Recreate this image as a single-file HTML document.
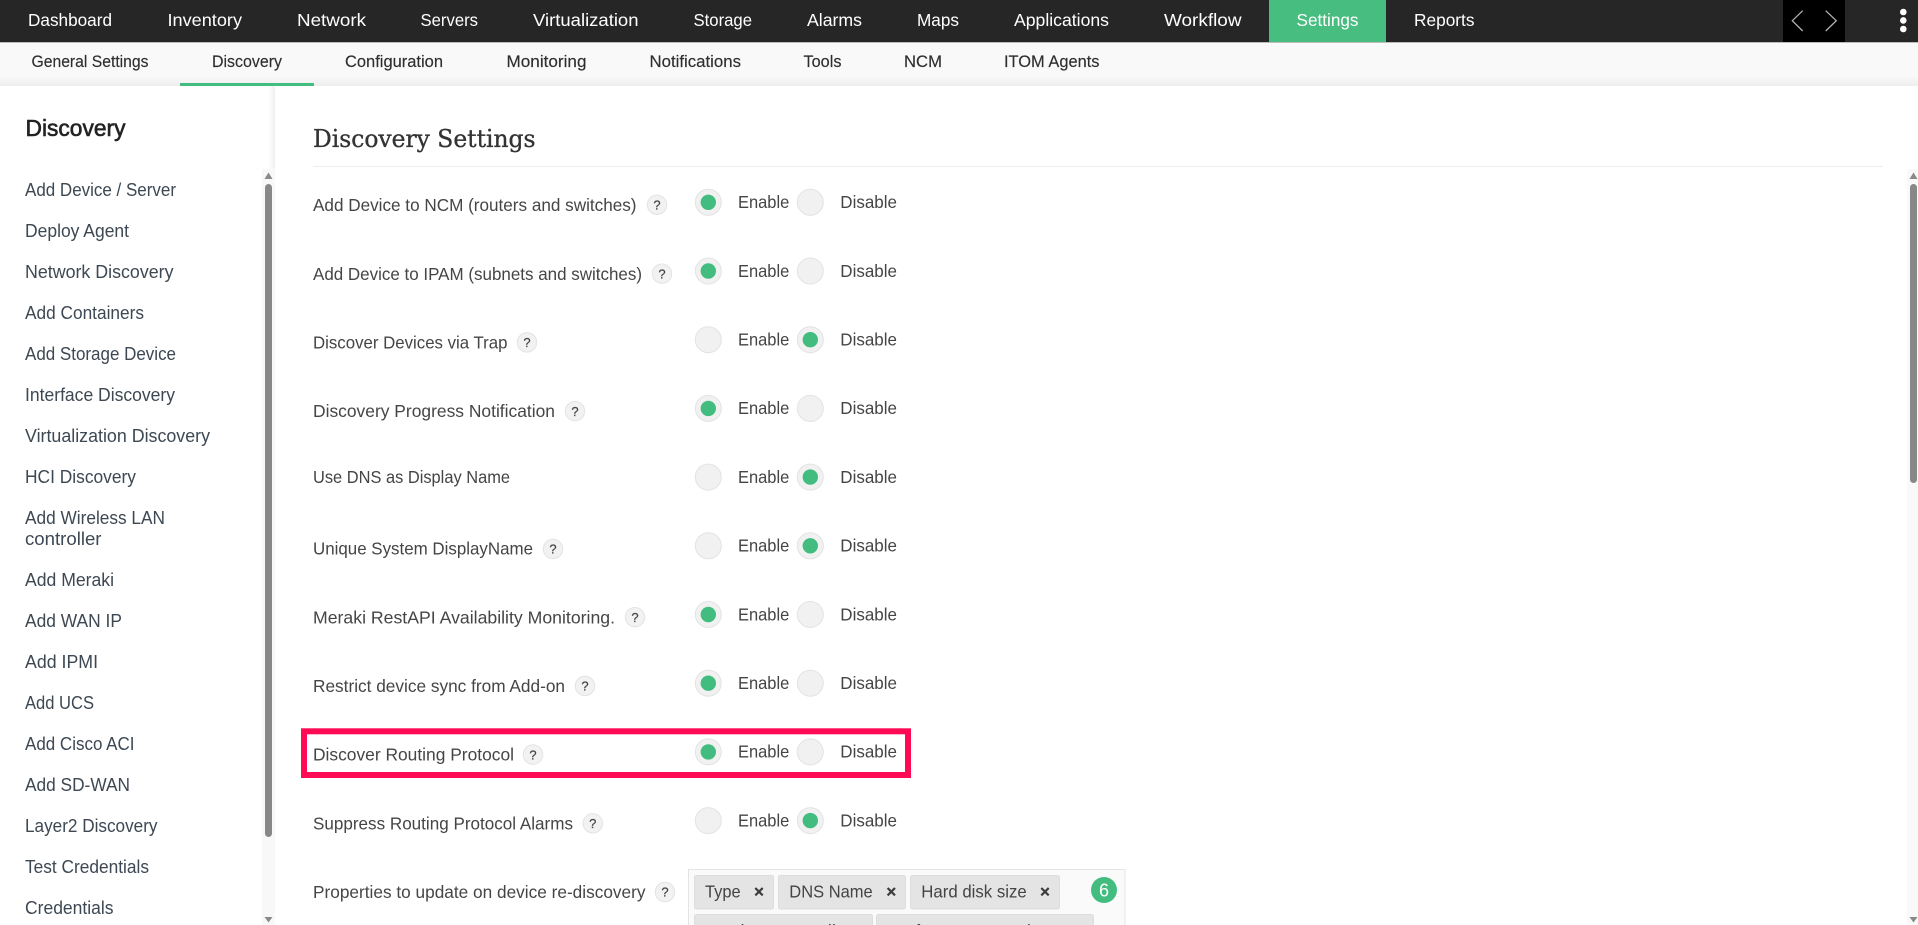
<!DOCTYPE html>
<html lang="en">
<head>
<meta charset="utf-8">
<title>Discovery Settings</title>
<style>
html,body{margin:0;padding:0;width:1918px;height:925px;overflow:hidden;background:#fff}
svg{display:block;position:absolute;left:0;top:0}
text{font-family:"Liberation Sans",sans-serif;white-space:pre}
.nav text{font-size:17.5px;fill:#fff}
.sub text{font-size:16.5px;fill:#2e2e2e}
.side text{font-size:18px;fill:#3d4853}
.lab text{font-size:17.5px;fill:#454545}
.opt text{font-size:17.5px;fill:#454545}
.help circle{fill:#f2f2f2;stroke:#e3e3e3;stroke-width:1}
.help text{font-size:13px;fill:#444;stroke:#444;stroke-width:.2;text-anchor:middle}
.r circle{fill:#f1f1f1;stroke:#e3e3e3;stroke-width:1}
.r circle.on{fill:#43bd7f;stroke:none}
.tag rect{fill:#e4e4e4;stroke:#dddddd;stroke-width:1}
.tag text{font-size:17.5px;fill:#444}
.tag path{stroke:#3c3c3c;stroke-width:2.2;fill:none}
</style>
</head>
<body>
<svg width="1918" height="925" viewBox="0 0 1918 925" xmlns="http://www.w3.org/2000/svg">
<defs>
<linearGradient id="sg" x1="0" y1="0" x2="0" y2="1"><stop offset="0" stop-color="#f9f9f9"/><stop offset="1" stop-color="#eeeeee"/></linearGradient>
<linearGradient id="ss" x1="0" y1="0" x2="1" y2="0"><stop offset="0" stop-color="#ffffff"/><stop offset="1" stop-color="#f0f0f0"/></linearGradient>
</defs>
<rect width="1918" height="925" fill="#fff"/>

<!-- top nav -->
<rect x="0" y="0" width="1918" height="42" fill="#262626"/>
<rect x="0" y="42" width="1918" height="1" fill="#bdbdbd"/>
<rect x="1269" y="0" width="117" height="42" fill="#48bd80"/>
<rect x="1783" y="0" width="62" height="42" fill="#000"/>
<g class="nav">
<text x="28" y="26" textLength="84" lengthAdjust="spacingAndGlyphs">Dashboard</text>
<text x="167.5" y="26" textLength="74.5" lengthAdjust="spacingAndGlyphs">Inventory</text>
<text x="297" y="26" textLength="69" lengthAdjust="spacingAndGlyphs">Network</text>
<text x="420.5" y="26" textLength="57.5" lengthAdjust="spacingAndGlyphs">Servers</text>
<text x="533" y="26" textLength="105.5" lengthAdjust="spacingAndGlyphs">Virtualization</text>
<text x="693.5" y="26" textLength="58.5" lengthAdjust="spacingAndGlyphs">Storage</text>
<text x="807" y="26" textLength="55" lengthAdjust="spacingAndGlyphs">Alarms</text>
<text x="917" y="26" textLength="42" lengthAdjust="spacingAndGlyphs">Maps</text>
<text x="1014" y="26" textLength="95" lengthAdjust="spacingAndGlyphs">Applications</text>
<text x="1164" y="26" textLength="77.5" lengthAdjust="spacingAndGlyphs">Workflow</text>
<text x="1296.5" y="26" textLength="62" lengthAdjust="spacingAndGlyphs">Settings</text>
<text x="1414" y="26" textLength="60.5" lengthAdjust="spacingAndGlyphs">Reports</text>
</g>
<path d="M1802.7 10.7L1792.3 20.7L1802.7 31" stroke="#b0b0b0" stroke-width="1.3" fill="none"/>
<path d="M1825.7 10.7L1836.3 20.7L1825.7 31" stroke="#b0b0b0" stroke-width="1.3" fill="none"/>
<circle cx="1903.3" cy="12" r="3.3" fill="#fff"/>
<circle cx="1903.3" cy="20.4" r="3.3" fill="#fff"/>
<circle cx="1903.3" cy="29" r="3.3" fill="#fff"/>

<!-- sub nav -->
<rect x="0" y="43" width="1918" height="33" fill="#f9f9f9"/>
<rect x="0" y="76" width="1918" height="10" fill="url(#sg)"/>
<rect x="180" y="83" width="134" height="3" fill="#43bd7f"/>
<g class="sub">
<text x="31.5" y="67" textLength="117" lengthAdjust="spacingAndGlyphs" stroke="#2e2e2e" stroke-width=".15">General Settings</text>
<text x="212" y="67" textLength="70" lengthAdjust="spacingAndGlyphs" stroke="#2e2e2e" stroke-width=".15">Discovery</text>
<text x="345" y="67" textLength="98" lengthAdjust="spacingAndGlyphs" stroke="#2e2e2e" stroke-width=".15">Configuration</text>
<text x="506.5" y="67" textLength="80" lengthAdjust="spacingAndGlyphs" stroke="#2e2e2e" stroke-width=".15">Monitoring</text>
<text x="649.5" y="67" textLength="91.5" lengthAdjust="spacingAndGlyphs" stroke="#2e2e2e" stroke-width=".15">Notifications</text>
<text x="803.5" y="67" textLength="38" lengthAdjust="spacingAndGlyphs" stroke="#2e2e2e" stroke-width=".15">Tools</text>
<text x="904" y="67" textLength="38" lengthAdjust="spacingAndGlyphs" stroke="#2e2e2e" stroke-width=".15">NCM</text>
<text x="1004" y="67" textLength="95.5" lengthAdjust="spacingAndGlyphs" stroke="#2e2e2e" stroke-width=".15">ITOM Agents</text>
</g>

<!-- sidebar -->
<rect x="268" y="86" width="7" height="839" fill="url(#ss)"/>
<rect x="262" y="169" width="13" height="756" fill="#f8f8f8"/>
<path d="M268.5 172.5L272.5 179H264.5Z" fill="#8a8a8a"/>
<rect x="265" y="184" width="7" height="653" rx="3.5" fill="#888"/>
<path d="M264.5 917H272.5L268.5 922.5Z" fill="#8a8a8a"/>
<text x="25.5" y="136" font-size="23" textLength="100" lengthAdjust="spacingAndGlyphs" fill="#222" stroke="#222" stroke-width=".6">Discovery</text>
<g class="side">
<text x="25" y="196" textLength="151" lengthAdjust="spacingAndGlyphs">Add Device / Server</text>
<text x="25" y="237" textLength="104" lengthAdjust="spacingAndGlyphs">Deploy Agent</text>
<text x="25" y="278" textLength="148.5" lengthAdjust="spacingAndGlyphs">Network Discovery</text>
<text x="25" y="319" textLength="119" lengthAdjust="spacingAndGlyphs">Add Containers</text>
<text x="25" y="360" textLength="151" lengthAdjust="spacingAndGlyphs">Add Storage Device</text>
<text x="25" y="401" textLength="150" lengthAdjust="spacingAndGlyphs">Interface Discovery</text>
<text x="25" y="442" textLength="185" lengthAdjust="spacingAndGlyphs">Virtualization Discovery</text>
<text x="25" y="483" textLength="111" lengthAdjust="spacingAndGlyphs">HCI Discovery</text>
<text x="25" y="524" textLength="140" lengthAdjust="spacingAndGlyphs">Add Wireless LAN</text>
<text x="25" y="545" textLength="76.5" lengthAdjust="spacingAndGlyphs">controller</text>
<text x="25" y="586" textLength="89" lengthAdjust="spacingAndGlyphs">Add Meraki</text>
<text x="25" y="627" textLength="97" lengthAdjust="spacingAndGlyphs">Add WAN IP</text>
<text x="25" y="668" textLength="73" lengthAdjust="spacingAndGlyphs">Add IPMI</text>
<text x="25" y="709" textLength="69" lengthAdjust="spacingAndGlyphs">Add UCS</text>
<text x="25" y="750" textLength="109.5" lengthAdjust="spacingAndGlyphs">Add Cisco ACI</text>
<text x="25" y="791" textLength="105" lengthAdjust="spacingAndGlyphs">Add SD-WAN</text>
<text x="25" y="832" textLength="132.5" lengthAdjust="spacingAndGlyphs">Layer2 Discovery</text>
<text x="25" y="873" textLength="124" lengthAdjust="spacingAndGlyphs">Test Credentials</text>
<text x="25" y="914" textLength="88.5" lengthAdjust="spacingAndGlyphs">Credentials</text>
</g>

<!-- main -->
<text x="313" y="147" font-size="24" textLength="222.5" lengthAdjust="spacingAndGlyphs" fill="#333" stroke="#333" stroke-width=".35" style='font-family:"DejaVu Serif",serif'>Discovery Settings</text>
<rect x="313" y="166" width="1570" height="1" fill="#eeeeee"/>
<rect x="1907" y="169" width="11" height="756" fill="#f9f9f9"/>
<path d="M1913.5 172.5L1917.5 179H1909.5Z" fill="#8a8a8a"/>
<rect x="1910" y="184" width="7" height="299" rx="3.5" fill="#888"/>
<path d="M1909.5 917H1917.5L1913.5 922.5Z" fill="#8a8a8a"/>

<!-- highlight -->
<rect x="304" y="731.3" width="604" height="43.7" fill="#fff" stroke="#ff0a54" stroke-width="6"/>

<g class="lab" transform="translate(0,-.4)">
<text x="313" y="211.5" textLength="323.5" lengthAdjust="spacingAndGlyphs">Add Device to NCM (routers and switches)</text>
<text x="313" y="280.2" textLength="329" lengthAdjust="spacingAndGlyphs">Add Device to IPAM (subnets and switches)</text>
<text x="313" y="348.9" textLength="194.5" lengthAdjust="spacingAndGlyphs">Discover Devices via Trap</text>
<text x="313" y="417.6" textLength="242" lengthAdjust="spacingAndGlyphs">Discovery Progress Notification</text>
<text x="313" y="483.5" textLength="197" lengthAdjust="spacingAndGlyphs">Use DNS as Display Name</text>
<text x="313" y="555" textLength="220" lengthAdjust="spacingAndGlyphs">Unique System DisplayName</text>
<text x="313" y="623.7" textLength="302" lengthAdjust="spacingAndGlyphs">Meraki RestAPI Availability Monitoring.</text>
<text x="313" y="692.4" textLength="252" lengthAdjust="spacingAndGlyphs">Restrict device sync from Add-on</text>
<text x="313" y="761.1" textLength="201" lengthAdjust="spacingAndGlyphs">Discover Routing Protocol</text>
<text x="313" y="829.8" textLength="260" lengthAdjust="spacingAndGlyphs">Suppress Routing Protocol Alarms</text>
<text x="313" y="898.5" textLength="332.5" lengthAdjust="spacingAndGlyphs">Properties to update on device re-discovery</text>
</g>

<g class="help">
<circle cx="657" cy="204.8" r="9.7"/><text x="657" y="209.5">?</text>
<circle cx="662" cy="273.7" r="9.7"/><text x="662" y="278.4">?</text>
<circle cx="527" cy="342.4" r="9.7"/><text x="527" y="347.1">?</text>
<circle cx="575" cy="411.1" r="9.7"/><text x="575" y="415.8">?</text>
<circle cx="553" cy="549" r="9.7"/><text x="553" y="553.7">?</text>
<circle cx="635" cy="617.2" r="9.7"/><text x="635" y="621.9">?</text>
<circle cx="585" cy="685.9" r="9.7"/><text x="585" y="690.6">?</text>
<circle cx="533" cy="754.6" r="9.7"/><text x="533" y="759.3">?</text>
<circle cx="592.8" cy="823.3" r="9.7"/><text x="592.8" y="828">?</text>
<circle cx="665" cy="892" r="9.7"/><text x="665" y="896.7">?</text>
</g>

<g class="r">
<circle cx="708.3" cy="202.3" r="13"/><circle class="on" cx="708.3" cy="202.3" r="7.7"/><circle cx="810.3" cy="202.3" r="13"/>
<circle cx="708.3" cy="271" r="13"/><circle class="on" cx="708.3" cy="271" r="7.7"/><circle cx="810.3" cy="271" r="13"/>
<circle cx="708.3" cy="339.7" r="13"/><circle cx="810.3" cy="339.7" r="13"/><circle class="on" cx="810.3" cy="339.7" r="7.7"/>
<circle cx="708.3" cy="408.4" r="13"/><circle class="on" cx="708.3" cy="408.4" r="7.7"/><circle cx="810.3" cy="408.4" r="13"/>
<circle cx="708.3" cy="477.1" r="13"/><circle cx="810.3" cy="477.1" r="13"/><circle class="on" cx="810.3" cy="477.1" r="7.7"/>
<circle cx="708.3" cy="545.8" r="13"/><circle cx="810.3" cy="545.8" r="13"/><circle class="on" cx="810.3" cy="545.8" r="7.7"/>
<circle cx="708.3" cy="614.5" r="13"/><circle class="on" cx="708.3" cy="614.5" r="7.7"/><circle cx="810.3" cy="614.5" r="13"/>
<circle cx="708.3" cy="683.2" r="13"/><circle class="on" cx="708.3" cy="683.2" r="7.7"/><circle cx="810.3" cy="683.2" r="13"/>
<circle cx="708.3" cy="751.9" r="13"/><circle class="on" cx="708.3" cy="751.9" r="7.7"/><circle cx="810.3" cy="751.9" r="13"/>
<circle cx="708.3" cy="820.6" r="13"/><circle cx="810.3" cy="820.6" r="13"/><circle class="on" cx="810.3" cy="820.6" r="7.7"/>
</g>

<g class="opt" transform="translate(0,-.4)">
<text x="738" y="208.5" textLength="51.3" lengthAdjust="spacingAndGlyphs">Enable</text><text x="840.3" y="208.5" textLength="56.7" lengthAdjust="spacingAndGlyphs">Disable</text>
<text x="738" y="277.2" textLength="51.3" lengthAdjust="spacingAndGlyphs">Enable</text><text x="840.3" y="277.2" textLength="56.7" lengthAdjust="spacingAndGlyphs">Disable</text>
<text x="738" y="345.9" textLength="51.3" lengthAdjust="spacingAndGlyphs">Enable</text><text x="840.3" y="345.9" textLength="56.7" lengthAdjust="spacingAndGlyphs">Disable</text>
<text x="738" y="414.6" textLength="51.3" lengthAdjust="spacingAndGlyphs">Enable</text><text x="840.3" y="414.6" textLength="56.7" lengthAdjust="spacingAndGlyphs">Disable</text>
<text x="738" y="483.3" textLength="51.3" lengthAdjust="spacingAndGlyphs">Enable</text><text x="840.3" y="483.3" textLength="56.7" lengthAdjust="spacingAndGlyphs">Disable</text>
<text x="738" y="552" textLength="51.3" lengthAdjust="spacingAndGlyphs">Enable</text><text x="840.3" y="552" textLength="56.7" lengthAdjust="spacingAndGlyphs">Disable</text>
<text x="738" y="620.7" textLength="51.3" lengthAdjust="spacingAndGlyphs">Enable</text><text x="840.3" y="620.7" textLength="56.7" lengthAdjust="spacingAndGlyphs">Disable</text>
<text x="738" y="689.4" textLength="51.3" lengthAdjust="spacingAndGlyphs">Enable</text><text x="840.3" y="689.4" textLength="56.7" lengthAdjust="spacingAndGlyphs">Disable</text>
<text x="738" y="758.1" textLength="51.3" lengthAdjust="spacingAndGlyphs">Enable</text><text x="840.3" y="758.1" textLength="56.7" lengthAdjust="spacingAndGlyphs">Disable</text>
<text x="738" y="826.8" textLength="51.3" lengthAdjust="spacingAndGlyphs">Enable</text><text x="840.3" y="826.8" textLength="56.7" lengthAdjust="spacingAndGlyphs">Disable</text>
</g>

<!-- tag box -->
<rect x="688.5" y="869.5" width="436.5" height="70" fill="#fafafa" stroke="#e4e4e4"/>
<g class="tag">
<rect x="694.5" y="875.5" width="79" height="33.5" rx="2"/>
<text x="705" y="897.7" textLength="35.7" lengthAdjust="spacingAndGlyphs">Type</text>
<path d="M755.3 888L762.7 895.4M762.7 888L755.3 895.4"/>
<rect x="778.5" y="875.5" width="127" height="33.5" rx="2"/>
<text x="789.3" y="897.7" textLength="83.4" lengthAdjust="spacingAndGlyphs">DNS Name</text>
<path d="M887.6 888L895 895.4M895 888L887.6 895.4"/>
<rect x="910.5" y="875.5" width="149" height="33.5" rx="2"/>
<text x="921.3" y="897.7" textLength="105.4" lengthAdjust="spacingAndGlyphs">Hard disk size</text>
<path d="M1041.3 888L1048.7 895.4M1048.7 888L1041.3 895.4"/>
<rect x="694.5" y="914.5" width="178" height="33.5" rx="2"/>
<text x="705" y="937" textLength="140" lengthAdjust="spacingAndGlyphs">Hardware Details</text>
<rect x="876.5" y="914.5" width="217" height="33.5" rx="2"/>
<text x="888" y="937" textLength="172" lengthAdjust="spacingAndGlyphs">Performance Monitors</text>
</g>
<circle cx="1104" cy="890" r="13" fill="#43bd7f"/>
<text x="1104" y="896.5" font-size="18" fill="#fff" text-anchor="middle">6</text>
</svg>
</body>
</html>
